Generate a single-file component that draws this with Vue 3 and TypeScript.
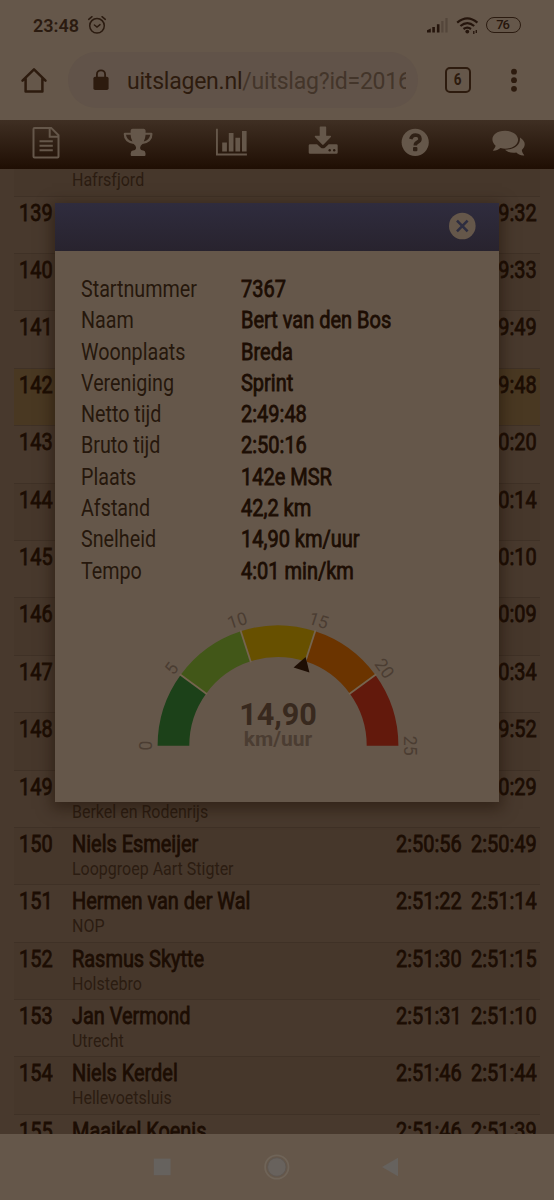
<script setup lang="ts">
interface Runner {
  place: number
  name: string
  club: string
  gross: string
  net: string
}

const runners: Runner[] = [
  { place: 138, name: '', club: 'Hafrsfjord', gross: '', net: '' },
  { place: 139, name: '', club: '', gross: '', net: '2:49:32' },
  { place: 140, name: '', club: '', gross: '', net: '2:49:33' },
  { place: 141, name: '', club: '', gross: '', net: '2:49:49' },
  { place: 142, name: '', club: '', gross: '', net: '2:49:48' },
  { place: 143, name: '', club: '', gross: '', net: '2:50:20' },
  { place: 144, name: '', club: '', gross: '', net: '2:50:14' },
  { place: 145, name: '', club: '', gross: '', net: '2:50:10' },
  { place: 146, name: '', club: '', gross: '', net: '2:50:09' },
  { place: 147, name: '', club: '', gross: '', net: '2:50:34' },
  { place: 148, name: '', club: '', gross: '', net: '2:49:52' },
  { place: 149, name: '', club: 'Berkel en Rodenrijs', gross: '', net: '2:50:29' },
  { place: 150, name: 'Niels Esmeijer', club: 'Loopgroep Aart Stigter', gross: '2:50:56', net: '2:50:49' },
  { place: 151, name: 'Hermen van der Wal', club: 'NOP', gross: '2:51:22', net: '2:51:14' },
  { place: 152, name: 'Rasmus Skytte', club: 'Holstebro', gross: '2:51:30', net: '2:51:15' },
  { place: 153, name: 'Jan Vermond', club: 'Utrecht', gross: '2:51:31', net: '2:51:10' },
  { place: 154, name: 'Niels Kerdel', club: 'Hellevoetsluis', gross: '2:51:46', net: '2:51:44' },
  { place: 155, name: 'Maaikel Koenis', club: '', gross: '2:51:46', net: '2:51:39' },
]

const details: [string, string][] = [
  ['Startnummer', '7367'],
  ['Naam', 'Bert van den Bos'],
  ['Woonplaats', 'Breda'],
  ['Vereniging', 'Sprint'],
  ['Netto tijd', '2:49:48'],
  ['Bruto tijd', '2:50:16'],
  ['Plaats', '142e MSR'],
  ['Afstand', '42,2 km'],
  ['Snelheid', '14,90 km/uur'],
  ['Tempo', '4:01 min/km'],
]

const CX = 150
const CY = 145.7
const OUTER = 120.4
const INNER = 88.7

function polar(value: number, radius: number): string {
  const a = Math.PI * (1 - value / 25)
  return `${(CX + radius * Math.cos(a)).toFixed(2)} ${(CY - radius * Math.sin(a)).toFixed(2)}`
}

function segment(from: number, to: number): string {
  return `M${polar(from, OUTER)}A${OUTER} ${OUTER} 0 0 1 ${polar(to, OUTER)}L${polar(to, INNER)}A${INNER} ${INNER} 0 0 0 ${polar(from, INNER)}Z`
}

const segments = ['#1c4119', '#425718', '#675000', '#6b3400', '#62190c'].map((color, i) => ({
  color,
  d: segment(i * 5, i * 5 + 5),
}))
const dividers = [5, 10, 15, 20].map((v) => `M${polar(v, INNER - 1)}L${polar(v, OUTER + 1)}`)
const ticks = [0, 5, 10, 15, 20, 25].map((v) => ({
  v,
  transform: `rotate(${(v / 25) * 180 - 90} ${CX} ${CY})`,
}))
const needle = `rotate(${(14.9 / 25) * 180 - 90} ${CX} ${CY})`
</script>

<template>
  <div class="screen">
    <header class="chrome">
      <div class="status">
        <span class="clock">23:48</span>
        <svg class="alarm" width="20" height="20" viewBox="0 0 20 20">
          <g fill="none" stroke="#2b1b10" stroke-width="1.5" stroke-linecap="round">
            <circle cx="10" cy="10.8" r="7.3" />
            <path d="M7.4 10l2.6 2 3-2.4M1.7 4.4L5 1.7M18.3 4.4L15 1.7" />
          </g>
        </svg>
        <span class="grow"></span>
        <svg class="signal" width="22" height="16" viewBox="0 0 22 16">
          <path d="M1 15.500v-2.300l3.800-1.700v4zM6.300 10h2.600v5.500H6.300zM10.900 7.200h2.600v8.300h-2.600z" fill="#25150c" />
          <path d="M15.300 4h2.200v11.500h-2.200zM19.400 1h2.200v14.500h-2.200z" fill="#54463b" />
        </svg>
        <svg class="wifi" width="23" height="18" viewBox="0 0 23 18">
          <g fill="none" stroke="#25150c" stroke-width="2.200">
            <path d="M1.200 5.700Q11.300-2.800 21.400 5.700M4.400 9Q11.300 3.300 18.200 9M7.500 12Q11.300 9.200 15 12" />
          </g>
          <circle cx="11.300" cy="14.600" r="1.900" fill="#25150c" />
          <path d="M17.800 14v3M20.300 13v3" stroke="#25150c" stroke-width="1.300" />
        </svg>
        <span class="battery"><span>76</span></span>
      </div>
      <div class="toolbar">
        <svg class="home" width="28" height="28" viewBox="0 0 28 28">
          <path d="M2.500 14.600L14 3.300l11.500 11.300M5.600 12.400v13h16.800v-13" fill="none" stroke="#2d1b0e" stroke-width="2.500" stroke-linejoin="round" stroke-linecap="round" />
        </svg>
        <div class="address">
          <svg class="lock" width="16" height="22" viewBox="0 0 16 22">
            <rect x="0.400" y="7.700" width="15.200" height="13.300" rx="1.800" fill="#2d1b0e" />
            <path d="M3.900 8.500V5.400a4.100 4.100 0 0 1 8.200 0v3.100" fill="none" stroke="#2d1b0e" stroke-width="1.800" />
          </svg>
          <div class="url">uitslagen.nl<i>/uitslag?id=2016</i></div>
        </div>
        <span class="tabs"><span>6</span></span>
        <svg class="more" width="8" height="28" viewBox="0 0 8 28">
          <g fill="#2d1b0e"><circle cx="4" cy="5.700" r="2.900" /><circle cx="4" cy="14.200" r="2.900" /><circle cx="4" cy="22.800" r="2.900" /></g>
        </svg>
      </div>
    </header>

    <nav class="menu">
      <svg viewBox="0 0 40 40">
        <path d="M8.500 5.900h16.700l7.300 7.300v21.200a1 1 0 0 1-1 1h-23a1 1 0 0 1-1-1V6.900a1 1 0 0 1 1-1zM23.700 6v8.700h8.700" fill="none" stroke="#65574a" stroke-width="2" />
        <path d="M13.500 19.200h13.300M13.500 23.700h13.300M13.500 28.200h13.300" stroke="#65574a" stroke-width="2" />
      </svg>
      <svg viewBox="0 0 40 40">
        <path d="M12.600 8.500q.2-1.800 2-1.800h11q1.800 0 2 1.800v2.300h5.700q1.200 0 1.200 1.200 0 8.500-10 10-2.300 1.900-2.400 3.700.1 2.500 3.200 2.700 2 .3 2.200 2.800v1.900q0 .9-.9.900h-13q-.9 0-.9-.9v-1.900q.2-2.500 2.200-2.800 3.100-.2 3.200-2.700-.1-1.800-2.400-3.700-10-1.500-10-10 0-1.200 1.200-1.200h5.700zm0 4.300H8q.6 5 6.400 6.700-1.500-2.600-1.800-6.700zm15 0q-.3 4.100-1.800 6.700 5.800-1.700 6.400-6.700z" fill="#65574a" />
      </svg>
      <svg viewBox="0 0 40 40">
        <path d="M5 6.700h1.900v24.800h29v2H5zM11.200 20.500h4.700v9h-4.700zM17.800 11h4.700v18.500h-4.700zM24.400 15.700h4.700v13.800h-4.700zM31 9h4.600v20.500H31z" fill="#65574a" />
      </svg>
      <svg viewBox="0 0 40 40">
        <path d="M17.400 4.500h5.100q.7 0 .7.700v8.600h4.300q1 .2.400 1.100l-7.300 7.700q-.7.600-1.400 0l-7.300-7.700q-.6-.9.400-1.100h4.400V5.200q0-.7.700-.7z" fill="#65574a" />
        <path d="M7 22.200h7.100l3.500 3.300q2.300 1.700 4.600 0l3.500-3.300h7.700q1.300 0 1.300 1.300v7q0 1.300-1.300 1.300H7q-1.300 0-1.300-1.300v-7q0-1.300 1.300-1.300z" fill="#65574a" />
        <circle cx="26.700" cy="28.200" r="1.200" fill="#2b1b10" /><circle cx="31.200" cy="28.200" r="1.200" fill="#2b1b10" />
      </svg>
      <svg viewBox="0 0 40 40">
        <circle cx="20.200" cy="20.300" r="13.600" fill="#65574a" />
        <path d="M15.700 17q1.300-4 4.800-4 4.400.2 4.500 3.900 0 1.900-2.400 3.200-2.300 1.200-2.300 3.300" fill="none" stroke="#302116" stroke-width="3.500" />
        <rect x="18" y="25" width="4.400" height="4.200" rx="1" fill="#302116" />
      </svg>
      <svg viewBox="0 0 40 40">
        <path d="M32 15.500c7.200 4.500 4.800 10 1.800 12.400.3 2.500 1.700 4 2.500 5.500-3.500.4-6.700-1.700-8-2.900-4.300.9-9-.4-11.300-2.800 9.500-.3 15.500-4.500 15-12.200z" fill="#65574a" />
        <path d="M17.200 8.700c7 0 12.900 4 12.900 9s-5.900 9-12.900 9q-2.400 0-4.700-.7c-2.200 1.800-5.200 2.900-7.800 2.600 1.300-1.300 2.600-3.200 2.900-4.900C1.200 18.200 4.400 8.700 17.200 8.700z" fill="#65574a" />
      </svg>
    </nav>

    <main class="results">
      <div class="list">
        <div v-for="r in runners" :key="r.place" class="row" :class="{ even: r.place % 2 === 0, active: r.place === 142 }">
          <div class="strong"><span class="cond">{{ r.place }}</span></div>
          <div>
            <div class="strong"><span class="cond">{{ r.name }}</span></div>
            <div class="club"><span class="cond">{{ r.club }}</span></div>
          </div>
          <div class="strong"><span class="cond">{{ r.gross }}</span></div>
          <div class="strong"><span class="cond">{{ r.net }}</span></div>
        </div>
      </div>
    </main>

    <footer class="keys">
      <svg width="554" height="66" viewBox="0 0 554 66">
        <rect x="153.800" y="24.600" width="16.800" height="16.600" fill="#66625e" />
        <circle cx="276.800" cy="33" r="11.700" fill="none" stroke="#6f6458" stroke-width="1.800" />
        <circle cx="276.800" cy="33" r="9.200" fill="#68625d" stroke="#5d5752" stroke-width=".8" />
        <path d="M382 33l16-9.300v18.600z" fill="#66625e" />
      </svg>
    </footer>

    <section class="dialog">
      <div class="titlebar">
        <svg width="28" height="28" viewBox="0 0 28 28">
          <circle cx="14.300" cy="14" r="13.300" fill="#65574a" />
          <path d="M9 8.700l10.600 10.600M19.600 8.700L9 19.300" stroke="#2d2d40" stroke-width="2.600" />
        </svg>
      </div>
      <dl class="details">
        <template v-for="[label, value] in details" :key="label">
          <dt><span class="cond">{{ label }}</span></dt>
          <dd><span class="cond">{{ value }}</span></dd>
        </template>
      </dl>
      <svg class="gauge" width="300" height="180" viewBox="0 0 300 180">
        <path v-for="s in segments" :key="s.color" :d="s.d" :fill="s.color" />
        <path v-for="d in dividers" :key="d" :d="d" stroke="#75644f" stroke-width="1.800" />
        <text v-for="t in ticks" :key="t.v" :x="CX" :y="CY - 125.500" :transform="t.transform" class="tick">{{ t.v }}</text>
        <path :d="`M${CX} ${CY - 93}l8.300 13.800h-16.600z`" :transform="needle" fill="#1e0e04" />
        <text :x="CX" y="125" class="speed">14,90</text>
        <text :x="CX" y="146" class="unit">km/uur</text>
      </svg>
    </section>
  </div>
</template>

<style>
body {
  margin: 0;
  background: #4a3a2d;
}
</style>

<style scoped>
.screen {
  position: relative;
  width: 554px;
  height: 1200px;
  overflow: hidden;
  display: flex;
  flex-direction: column;
  background: #48392d;
  font-family: Roboto, "Liberation Sans", sans-serif;
  color: #1c0d03;
}
.chrome {
  height: 120px;
  flex: none;
  background: #65574a;
}
.status {
  display: flex;
  align-items: center;
  height: 50px;
  padding: 0 33px;
  box-sizing: border-box;
}
.clock {
  width: 46px;
  font-size: 18px;
  font-weight: 600;
  color: #2b1b10;
}
.alarm { margin-left: 8px; }
.grow { flex: 1; }
.signal { margin-right: 8px; }
.wifi { margin-right: 7px; margin-top: 2px; }
.battery {
  width: 35px;
  height: 16px;
  box-sizing: border-box;
  border: 1.5px solid #2b1b10;
  border-radius: 8px;
  display: flex;
  align-items: center;
  justify-content: center;
  font-size: 13px;
  font-weight: 500;
  letter-spacing: -1.2px;
  color: #25150c;
}
.battery span {
  padding-right: 2px;
  line-height: 12px;
}
.toolbar {
  display: flex;
  align-items: center;
  height: 60px;
}
.home { margin-left: 20px; }
.address {
  display: flex;
  align-items: center;
  width: 350px;
  height: 56px;
  box-sizing: border-box;
  margin-left: 20px;
  padding-left: 25px;
  border-radius: 28px;
  background: #615349;
}
.lock { flex: none; }
.url {
  width: 279px;
  margin: 4px 0 0 18px;
  overflow: hidden;
  white-space: nowrap;
  font-size: 23px;
  line-height: 30px;
  letter-spacing: -0.22px;
  color: #2d1b0e;
}
.url i {
  font-style: normal;
  color: #43352a;
}
.tabs {
  width: 26px;
  height: 26px;
  box-sizing: border-box;
  margin-left: 27px;
  border: 2.5px solid #2d1b0e;
  border-radius: 5px;
  text-align: center;
  font-size: 16.5px;
  line-height: 22px;
  font-weight: 700;
  color: #2d1b0e;
}
.tabs span {
  display: inline-block;
  transform: scaleX(0.82);
}
.more { margin-left: 39px; }
.menu {
  flex: none;
  display: grid;
  grid-template-columns: repeat(6, 1fr);
  justify-items: center;
  height: 49px;
  padding-top: 2px;
  box-sizing: border-box;
  background: linear-gradient(#3f2f23, #1f0e03);
}
.menu svg {
  width: 40px;
  height: 40px;
}
.results {
  flex: 1;
  min-height: 0;
  overflow: hidden;
  padding: 0 14px;
}
.list { margin-top: -30.8px; }
.row {
  display: grid;
  grid-template-columns: 53px 1fr 75px 69.5px;
  height: 57.4px;
  box-sizing: border-box;
  padding: 2px 0 0 5px;
  border-top: 1px solid #3f3126;
  background: #48392d;
  white-space: nowrap;
}
.row.even { background: #46372b; }
.row.active { background: #493822; }
.strong {
  font-size: 23.5px;
  line-height: 28px;
  height: 28px;
  -webkit-text-stroke: 0.8px;
}
.strong .cond { transform: scaleX(0.848); }
.club {
  font-size: 18.3px;
  line-height: 22px;
  color: #2b1c11;
}
.cond {
  display: inline-block;
  transform: scaleX(0.875);
  transform-origin: left;
}
.keys {
  flex: none;
  height: 66px;
  background: #65574a;
}
.keys svg { display: block; }
.dialog {
  position: absolute;
  left: 55px;
  top: 203px;
  width: 444px;
  height: 599px;
  background: #65574a;
  box-shadow: 0 4px 14px 3px rgba(30, 15, 5, 0.5);
}
.titlebar {
  display: flex;
  justify-content: flex-end;
  height: 48px;
  padding: 8.5px 23px 0 0;
  box-sizing: border-box;
  background: linear-gradient(#2f2c3e, #28232e);
}
.details {
  display: grid;
  grid-template-columns: 160px 1fr;
  grid-auto-rows: 31.3px;
  margin: 23px 0 0 26px;
  line-height: 31.3px;
  white-space: nowrap;
}
.details dt {
  font-size: 23px;
  color: #26170c;
}
.details dt .cond { transform: scaleX(0.857); }
.details dd {
  margin: 0;
  font-size: 23.3px;
  -webkit-text-stroke: 0.8px;
}
.details dd .cond { transform: scaleX(0.858); }
.gauge {
  display: block;
  margin: 13px 0 0 72.5px;
}
.gauge text { text-anchor: middle; }
.gauge .tick {
  font-size: 17.5px;
  fill: #4b3d32;
}
.gauge .speed {
  font-size: 30.6px;
  font-weight: 700;
  fill: #38291e;
}
.gauge .unit {
  font-size: 21px;
  font-weight: 700;
  fill: #4b3d32;
}
</style>
